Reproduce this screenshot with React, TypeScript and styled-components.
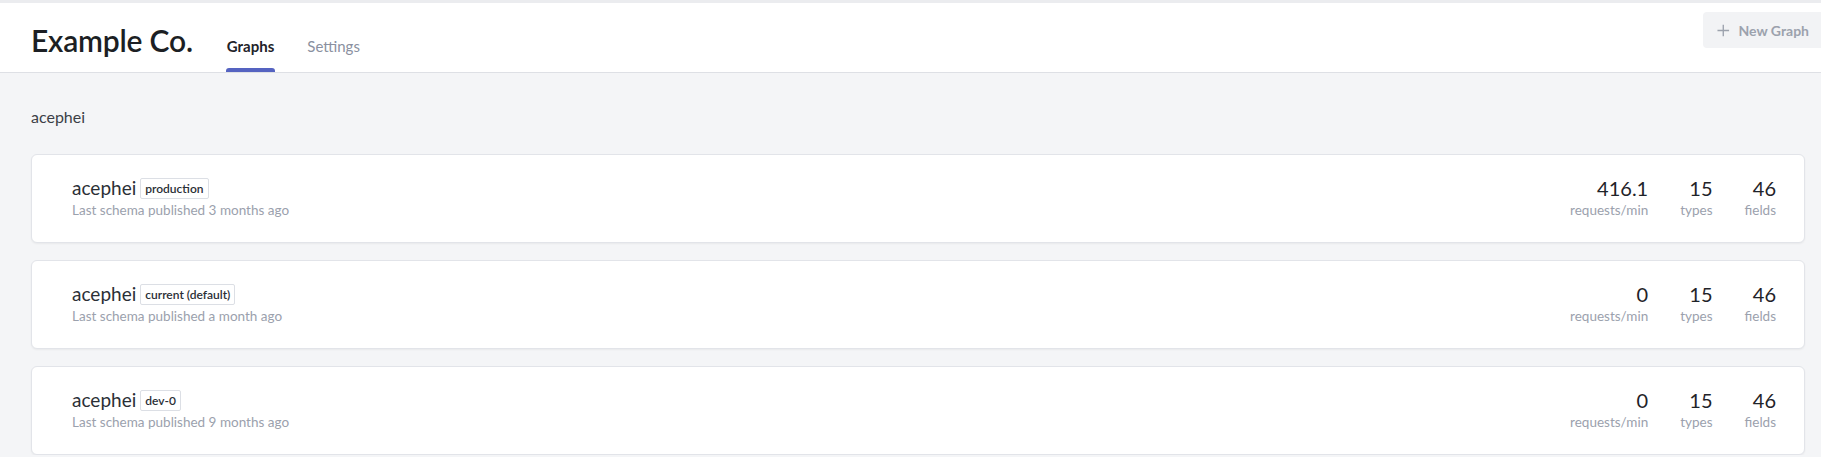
import React from "react";
import styled, { createGlobalStyle } from "styled-components";

interface Variant {
    name: string,
    tag: string,
    published: string,
    requests: string,
    types: number,
    fields: number
}

const variants: Variant[] = [
    { name: "acephei", tag: "production", published: "3 months ago", requests: "416.1", types: 15, fields: 46 },
    { name: "acephei", tag: "current (default)", published: "a month ago", requests: "0", types: 15, fields: 46 },
    { name: "acephei", tag: "dev-0", published: "9 months ago", requests: "0", types: 15, fields: 46 },
];

const GlobalStyle = createGlobalStyle`
  body {
    margin: 0;
    background: #f4f5f7;
    font-family: Lato, "Noto Sans", sans-serif;
    color: #2b2f36;
    overflow: hidden;
  }
`

const Header = styled.header`
  display: flex;
  align-items: stretch;
  justify-content: space-between;
  height: 69px;
  background: #fff;
  border-top: 3px solid #ebecef;
  border-bottom: 1px solid #dee0e5;
  padding-left: 31px;
`
const Brand = styled.div`
  display: flex;
  align-items: flex-end;
`
const OrgName = styled.h1`
  margin: 0 34px 14px 0;
  font-size: 30px;
  line-height: 36px;
  font-weight: 600;
  color: #1c1f24;
  letter-spacing: -0.2px;
`
const Tabs = styled.nav`
  display: flex;
  gap: 33px;
  height: 100%;
  align-items: flex-end;
`
const Tab = styled.a<{ $active?: boolean }>`
  position: relative;
  padding-bottom: 16px;
  font-size: 15px;
  line-height: 20px;
  font-weight: ${p => p.$active ? 700 : 400};
  color: ${p => p.$active ? "#1f2329" : "#8a90a0"};
  cursor: pointer;

  &::after {
    content: "";
    display: ${p => p.$active ? "block" : "none"};
    position: absolute;
    left: -1px;
    right: -1px;
    bottom: 0;
    height: 4px;
    border-radius: 3px 3px 0 0;
    background: #5563c1;
  }
`
const NewGraphButton = styled.button`
  align-self: center;
  margin-top: -15px;
  display: flex;
  align-items: center;
  gap: 9px;
  height: 36px;
  width: 118px;
  padding: 0 12px 0 14px;
  border: none;
  border-radius: 4px 0 0 4px;
  background: #f2f3f5;
  color: #9ca2ad;
  font-family: inherit;
  font-size: 14px;
  font-weight: 700;
  white-space: nowrap;
`
const Main = styled.main`
  padding: 33px 16px 0 31px;
`
const SectionTitle = styled.h2`
  margin: 0 0 26px;
  font-size: 16px;
  line-height: 22px;
  font-weight: 400;
  color: #3b3f46;
`
const CardList = styled.div`
  display: flex;
  flex-direction: column;
  gap: 17px;
`
const Card = styled.div`
  display: flex;
  align-items: center;
  justify-content: space-between;
  height: 89px;
  box-sizing: border-box;
  padding: 0 28px 0 40px;
  background: #fff;
  border: 1px solid #e2e4e9;
  border-radius: 6px;
  box-shadow: 0 1px 2px rgba(18, 21, 26, 0.05);
`
const Info = styled.div`
  display: flex;
  flex-direction: column;
`
const TitleRow = styled.div`
  display: flex;
  align-items: center;
  gap: 4px;
`
const VariantName = styled.span`
  font-size: 19px;
  line-height: 24px;
  color: #2b2f36;
`
const Tag = styled.span`
  display: inline-block;
  padding: 1px 4px;
  font-size: 12px;
  line-height: 17px;
  font-weight: 600;
  color: #2b2f36;
  border: 1px solid #dcdfe5;
  border-radius: 2px;
`
const Published = styled.span`
  font-size: 13.5px;
  line-height: 21px;
  color: #9ba1ad;
`
const Stats = styled.div`
  display: flex;
  gap: 32px;
`
const Stat = styled.div`
  display: flex;
  flex-direction: column;
  align-items: flex-end;
`
const StatValue = styled.span`
  font-size: 20px;
  line-height: 24px;
  color: #1f2329;
`
const StatLabel = styled.span`
  font-size: 13.5px;
  line-height: 21px;
  color: #9ba1ad;
`

const PlusIcon = () => (
    <svg width="13" height="13" viewBox="0 0 13 13" fill="none" stroke="currentColor" strokeWidth="1.4">
        <path d="M6.5 0.5v12M0.5 6.5h12" />
    </svg>
)

const App: React.FC = () => {
    return (
        <>
            <GlobalStyle />
            <Header>
                <Brand>
                    <OrgName>Example Co.</OrgName>
                    <Tabs>
                        <Tab $active>Graphs</Tab>
                        <Tab>Settings</Tab>
                    </Tabs>
                </Brand>
                <NewGraphButton><PlusIcon />New Graph</NewGraphButton>
            </Header>
            <Main>
                <SectionTitle>acephei</SectionTitle>
                <CardList>
                    {variants.map(v => (
                        <Card key={v.tag}>
                            <Info>
                                <TitleRow>
                                    <VariantName>{v.name}</VariantName>
                                    <Tag>{v.tag}</Tag>
                                </TitleRow>
                                <Published>Last schema published {v.published}</Published>
                            </Info>
                            <Stats>
                                <Stat><StatValue>{v.requests}</StatValue><StatLabel>requests/min</StatLabel></Stat>
                                <Stat><StatValue>{v.types}</StatValue><StatLabel>types</StatLabel></Stat>
                                <Stat><StatValue>{v.fields}</StatValue><StatLabel>fields</StatLabel></Stat>
                            </Stats>
                        </Card>
                    ))}
                </CardList>
            </Main>
        </>
    )
};

export default App;
